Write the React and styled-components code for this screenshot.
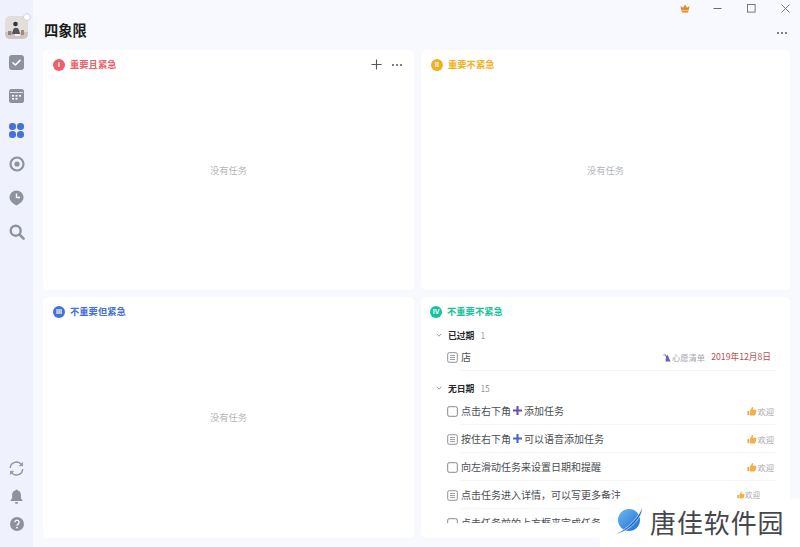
import React from "react";
import styled, { createGlobalStyle } from "styled-components";

const Global = createGlobalStyle`
  html, body { margin: 0; padding: 0; height: 100%; overflow: hidden; }
  body { font-family: "Noto Sans CJK SC", "Noto Sans", sans-serif; background: #f8f9fe; }
  #root { height: 100%; }
`;

const Shell = styled.div`
  position: relative; width: 800px; height: 547px; display: grid;
  grid-template-columns: 33px 1fr; background: #f8f9fe; overflow: hidden;
`;
const Sidebar = styled.nav`
  background: #eff2fc; display: flex; flex-direction: column; justify-content: space-between;
  align-items: center; padding: 16px 0 14px;
`;
const NavGroup = styled.div`
  display: flex; flex-direction: column; align-items: center; gap: ${p => p.$gap}px;
`;
const NavIcon = styled.div`
  width: 18px; height: 18px; display: flex; align-items: center; justify-content: center;
  color: #8e929e;
`;
const Avatar = styled.div`
  width: 23px; height: 23px; border-radius: 5px; overflow: hidden;
`;
const AvatarWrap = styled.div`position: relative; margin: 0 1px -2px 0;`;
const AvatarBadge = styled.span`
  position: absolute; top: -3px; right: -3px; width: 8px; height: 8px; border-radius: 50%;
  background: #fff; border: 1px solid #cfd1da; box-sizing: border-box;
`;
const Main = styled.main`
  display: flex; flex-direction: column; padding: 0 10px 9px; min-width: 0;
`;
const Header = styled.header`
  height: 50px; flex: none; display: flex; flex-direction: column;
`;
const WindowBar = styled.div`
  height: 17px; display: flex; align-items: center; justify-content: flex-end; gap: 24px;
`;
const WinBtn = styled.span`
  width: 10px; height: 10px; display: flex; align-items: center; justify-content: center; color: #666a72;
  margin-right: ${p => p.$mr || 0}px;
`;
const TitleRow = styled.div`
  flex: 1; display: flex; align-items: center; justify-content: space-between; padding: 0 3px 7px 1px;
`;
const Title = styled.h1`
  margin: 0; font-size: 14.3px; line-height: 20px; font-weight: 700; color: #1b1c20;
`;
const Dots = styled.span`
  display: inline-flex; gap: 2px; align-items: center;
  i { width: 2px; height: 2px; border-radius: 50%; background: ${p => p.$c || "#555"}; display: block; }
`;
const HeaderDots = styled(Dots)`margin-top: 6px;`;
const Grid = styled.section`
  flex: 1; min-height: 0; display: grid; grid-template-columns: 371px 369px; grid-template-rows: 240px 241px; gap: 7px;
`;
const Card = styled.article`
  background: #fff; border-radius: 5px; display: flex; flex-direction: column; overflow: hidden;
  padding: 8px 10px 0; position: relative; min-height: 0;
`;
const CardHead = styled.div`
  display: flex; align-items: center; height: 13px; flex: none; gap: 5px;
  margin-left: ${p => p.$ml || 0}px;
`;
const Quad = styled.span`
  width: 12px; height: 12px; border-radius: 50%; background: ${p => p.$c}; color: #fff;
  font: 700 7px/12px "Liberation Sans", sans-serif; text-align: center; flex: none;
`;
const CardTitle = styled.h2`
  margin: 0; font-size: 9.3px; line-height: 13px; font-weight: 700; color: ${p => p.$c}; flex: 1;
`;
const CardTools = styled.div`
  display: flex; align-items: center; gap: 10px; color: #555; margin-right: 2px;
`;
const Empty = styled.div`
  flex: 1; display: flex; align-items: center; justify-content: center;
  font-size: 9.25px; color: #b4b6bb; padding-bottom: 22px;
`;
const List = styled.div`
  height: 195px; overflow: hidden; margin-top: 10px; flex: none;
`;
const Section = styled.div`
  display: flex; align-items: center; height: 14px; margin-bottom: ${p => p.$mb}px; margin-top: ${p => p.$mt || 0}px;
  padding-left: 5px;
`;
const Chevron = styled.svg`width: 6px; height: 6px; color: #8a8d94; flex: none; margin-right: 6px;`;
const SectionName = styled.span`font-size: 8.8px; font-weight: 700; color: #26272b;`;
const Count = styled.span`font-size: 8.5px; color: #9a9ca3; margin-left: 6px;`;
const Row = styled.div`
  height: 28px; box-sizing: border-box; display: flex; align-items: center; margin-left: 16px; margin-right: 4px;
`;
const RowIcon = styled.svg`width: 11px; height: 11px; flex: none; margin-right: 3px; color: #85878e;`;
const RowBody = styled.div`
  flex: 1; min-width: 0; height: 100%; display: flex; align-items: center; justify-content: space-between;
  border-bottom: 1px solid #f3f4f6; box-sizing: border-box; padding-right: 2px;
`;
const RowText = styled.span`
  font-size: 10px; color: #4b4d53; white-space: nowrap; display: inline-flex; align-items: center;
`;
const PlusMark = styled.svg`width: 11px; height: 11px; margin: 0 1px; color: ${p => p.$c};`;
const Meta = styled.span`display: inline-flex; align-items: center; gap: 6px; padding-right: 3px;`;
const Tag = styled.span`
  display: inline-flex; align-items: center; font-size: ${p => p.$small ? 7.5 : 8.3}px; color: #a4a6ad; white-space: nowrap;
  margin-right: ${p => p.$small ? 14 : 0}px;
`;
const DateText = styled.span`font-size: 8.7px; color: #b5524f; white-space: nowrap;`;
const Watermark = styled.div`
  position: absolute; right: 0; bottom: 0; width: 200px; height: 48px; background: #fff;
  display: flex; align-items: center; padding: 0 0 2px 14px; box-sizing: border-box; gap: 6px;
`;
const WatermarkText = styled.span`
  font-size: 26px; letter-spacing: .9px; color: #45474b; font-weight: 400; white-space: nowrap; line-height: 30px;
`;

const Check = () => (
  <svg width="15" height="15" viewBox="0 0 15 15"><rect width="15" height="15" rx="3" fill="currentColor" /><path d="M4 7.800l2.400 2.200L11 5.400" fill="none" stroke="#fff" strokeWidth="1.600" strokeLinecap="round" strokeLinejoin="round" /></svg>
);
const Calendar = () => (
  <svg width="15" height="14" viewBox="0 0 15 14"><rect width="15" height="14" rx="2.500" fill="currentColor" /><rect x="1" y="3" width="13" height="1" fill="#fff" opacity=".7" /><g fill="#fff"><rect x="3" y="6" width="2" height="1.600" /><rect x="6.500" y="6" width="2" height="1.600" /><rect x="10" y="6" width="2" height="1.600" /><rect x="3" y="9" width="2" height="1.600" /><rect x="6.500" y="9" width="2" height="1.600" /></g></svg>
);
const Quadrants = () => (
  <svg width="15" height="15" viewBox="0 0 15 15" fill="#4470e0"><rect width="7" height="7" rx="3.300" /><rect x="8" width="7" height="7" rx="3.300" /><rect y="8" width="7" height="7" rx="3.300" /><rect x="8" y="8" width="7" height="7" rx="3.300" /></svg>
);
const Target = () => (
  <svg width="16" height="16" viewBox="0 0 16 16"><circle cx="8" cy="8" r="6.500" fill="none" stroke="currentColor" strokeWidth="2.200" /><circle cx="8" cy="8" r="2.600" fill="currentColor" /></svg>
);
const ClockPin = () => (
  <svg width="15" height="16" viewBox="0 0 15 16"><path d="M7.500 0.500a7 7 0 0 1 7 7c0 3.400-3.600 6.300-7 8-3.400-1.700-7-4.600-7-8a7 7 0 0 1 7-7z" fill="currentColor" /><path d="M7.500 3.500V7.500H11" fill="none" stroke="#fff" strokeWidth="1.400" /></svg>
);
const Search = () => (
  <svg width="16" height="16" viewBox="0 0 16 16" fill="none" stroke="currentColor"><circle cx="6.700" cy="6.700" r="5" strokeWidth="2.400" /><path d="M10.500 10.500L14.600 14.600" strokeWidth="2.600" strokeLinecap="round" /></svg>
);
const Sync = () => (
  <svg width="15" height="15" viewBox="0 0 15 15" fill="none" stroke="currentColor" strokeWidth="1.400"><path d="M1.300 7A6.200 6.200 0 0 1 12.400 3.400" /><path d="M13.700 8A6.200 6.200 0 0 1 2.600 11.600" /><path d="M13.600 1.600V4.800H10.400z" fill="currentColor" strokeWidth=".6" /><path d="M1.400 13.400V10.200H4.600z" fill="currentColor" strokeWidth=".6" /></svg>
);
const Bell = () => (
  <svg width="15" height="15" viewBox="0 0 15 15" fill="currentColor"><path d="M7.500 0.500c.7 0 1.100.4 1.200 1 2 .5 3.200 2.200 3.200 4.400v3.400l1.600 2v.7H1.500v-.7l1.600-2V5.900c0-2.200 1.200-3.900 3.200-4.400.1-.6.500-1 1.200-1z" /><rect x="6" y="13" width="3" height="1.700" rx=".8" /></svg>
);
const Help = () => (
  <svg width="14" height="14" viewBox="0 0 14 14"><circle cx="7" cy="7" r="7" fill="currentColor" /><path d="M4.900 5.300a2.100 2.100 0 1 1 3.200 1.800c-.7.400-1.100.8-1.100 1.500" fill="none" stroke="#fff" strokeWidth="1.300" /><circle cx="7" cy="10.600" r=".9" fill="#fff" /></svg>
);
const AvatarArt = () => (
  <svg width="23" height="23" viewBox="0 0 23 23">
    <rect width="23" height="23" fill="#e2dedb" />
    <rect y="16" width="23" height="7" fill="#cfc6c0" />
    <circle cx="10.500" cy="8" r="2.300" fill="#34343c" />
    <path d="M8 14c1-3 5-3 6 0l1 4H7z" fill="#55535c" />
    <rect x="3" y="15" width="3.500" height="4" fill="#8d8680" />
    <rect x="16" y="14" width="3" height="5" fill="#a6897e" />
    <rect x="10" y="18" width="5" height="2" fill="#f5f3f0" />
  </svg>
);
const Crown = () => (
  <svg width="11" height="9" viewBox="0 0 11 9" fill="#e88a24"><path d="M0.500 1.800l2.800 2L5.500 0l2.200 3.800 2.800-2-1 5H1.500z" /><rect x="1.700" y="7.300" width="7.600" height="1.500" rx=".5" /></svg>
);
const Plus = () => (
  <svg width="11" height="11" viewBox="0 0 11 11"><path d="M5.500 0.500v10M0.500 5.500h10" stroke="currentColor" strokeWidth="1.100" fill="none" /></svg>
);
const ThreeDots = ({ as: Comp = Dots, c }) => <Comp $c={c}><i /><i /><i /></Comp>;

const Chev = () => (
  <Chevron viewBox="0 0 6 6"><path d="M0.800 1.800L3 4.200l2.200-2.400" fill="none" stroke="currentColor" strokeWidth=".9" /></Chevron>
);
const Box = () => (
  <RowIcon viewBox="0 0 11 11"><rect x=".7" y=".7" width="9.600" height="9.600" rx="1.500" fill="none" stroke="currentColor" strokeWidth="1" /></RowIcon>
);
const Note = () => (
  <RowIcon viewBox="0 0 11 11"><rect x=".7" y=".7" width="9.600" height="9.600" rx="1.500" fill="none" stroke="currentColor" strokeWidth=".9" /><path d="M3 3.500h5M3 5.500h5M3 7.500h5" stroke="currentColor" strokeWidth=".8" /></RowIcon>
);
const Thumb = ({ size = 10 }) => (
  <svg width={size} height={size} viewBox="0 0 10 10"><path d="M0.500 5h1.800v4H0.500z" fill="#e8a33c" /><path d="M3 4.800l2-3.800c.9 0 1.300.7 1 1.700L5.800 3.800h2.600c.8 0 1.200.6 1 1.300L8.500 8.500c-.2.600-.6.900-1.200.9H3z" fill="#f3b04a" /></svg>
);
const Wish = () => (
  <svg width="10" height="10" viewBox="0 0 10 10"><path d="M2 1l3 3 .5-1.500L8.500 9.500H3.500L4 5z" fill="#6f5ac0" /><path d="M1 2.500l2 .5-1 1.500z" fill="#a9a0dc" /></svg>
);
const PlusInline = ({ c }) => (
  <PlusMark $c={c} viewBox="0 0 11 11"><path d="M5.500 1v9M1 5.500h9" stroke="currentColor" strokeWidth="2.100" /></PlusMark>
);
const Globe = () => (
  <svg width="30" height="30" viewBox="0 0 30 30">
    <defs><linearGradient id="wm" x1="0" y1="0" x2="1" y2="1"><stop offset="0" stopColor="#6cb8f2" /><stop offset="1" stopColor="#1f6fd0" /></linearGradient></defs>
    <circle cx="15" cy="13" r="11" fill="url(#wm)" />
    <path d="M1 27C6 26 22 16 28 1c1 6-6 15-13 20-5 3.500-10 6-14 6z" fill="#1a68c8" stroke="#fff" strokeWidth=".6" />
  </svg>
);

const Tasks = [
  { icon: Box, parts: ["点击右下角", "#6650b8", "添加任务"] },
  { icon: Note, parts: ["按住右下角", "#4d62c0", "可以语音添加任务"] },
  { icon: Box, parts: ["向左滑动任务来设置日期和提醒"] },
  { icon: Note, parts: ["点击任务进入详情，可以写更多备注"], small: true },
  { icon: Box, parts: ["点击任务前的上方框来完成任务"], noTag: true },
];

const EmptyCard = ({ color, mark, title, tools }) => (
  <Card>
    <CardHead>
      <Quad $c={color}>{mark}</Quad>
      <CardTitle $c={color}>{title}</CardTitle>
      {tools && <CardTools><Plus /><ThreeDots c="#555" /></CardTools>}
    </CardHead>
    <Empty>没有任务</Empty>
  </Card>
);

export default function App() {
  return (
    <Shell>
      <Global />
      <Sidebar>
        <NavGroup $gap={16}>
          <AvatarWrap>
            <Avatar><AvatarArt /></Avatar>
            <AvatarBadge />
          </AvatarWrap>
          <NavIcon><Check /></NavIcon>
          <NavIcon><Calendar /></NavIcon>
          <NavIcon><Quadrants /></NavIcon>
          <NavIcon><Target /></NavIcon>
          <NavIcon><ClockPin /></NavIcon>
          <NavIcon><Search /></NavIcon>
        </NavGroup>
        <NavGroup $gap={10}>
          <NavIcon><Sync /></NavIcon>
          <NavIcon><Bell /></NavIcon>
          <NavIcon><Help /></NavIcon>
        </NavGroup>
      </Sidebar>
      <Main>
        <Header>
          <WindowBar>
            <WinBtn $mr={-2}><Crown /></WinBtn>
            <WinBtn><svg width="9" height="9" viewBox="0 0 9 9"><path d="M0.500 4.500h8" stroke="currentColor" strokeWidth="1" /></svg></WinBtn>
            <WinBtn><svg width="9" height="9" viewBox="0 0 9 9"><rect x=".5" y=".5" width="7.600" height="7.600" fill="none" stroke="currentColor" strokeWidth=".9" /></svg></WinBtn>
            <WinBtn><svg width="9" height="9" viewBox="0 0 9 9"><path d="M.5.500l8 8M8.500.500l-8 8" stroke="currentColor" strokeWidth=".9" /></svg></WinBtn>
          </WindowBar>
          <TitleRow>
            <Title>四象限</Title>
            <ThreeDots as={HeaderDots} c="#555" />
          </TitleRow>
        </Header>
        <Grid>
          <EmptyCard color="#ee5f6b" mark="I" title="重要且紧急" tools />
          <EmptyCard color="#f2b021" mark="II" title="重要不紧急" />
          <EmptyCard color="#4470d8" mark="III" title="不重要但紧急" />
          <Card>
            <CardHead $ml={-1}>
              <Quad $c="#19c29a">IV</Quad>
              <CardTitle $c="#19c29a">不重要不紧急</CardTitle>
            </CardHead>
            <List>
              <Section $mb={1}><Chev /><SectionName>已过期</SectionName><Count>1</Count></Section>
              <Row>
                <Note />
                <RowBody>
                  <RowText>店</RowText>
                  <Meta>
                    <Tag><Wish />心愿清单</Tag>
                    <DateText>2019年12月8日</DateText>
                  </Meta>
                </RowBody>
              </Row>
              <Section $mt={10} $mb={2}><Chev /><SectionName>无日期</SectionName><Count>15</Count></Section>
              {Tasks.map((t, i) => {
                const Icon = t.icon;
                return (
                  <Row key={i}>
                    <Icon />
                    <RowBody>
                      <RowText>
                        {t.parts[0]}
                        {t.parts[1] && <PlusInline c={t.parts[1]} />}
                        {t.parts[2]}
                      </RowText>
                      {!t.noTag && (
                        <Tag $small={t.small}>
                          <Thumb size={t.small ? 8 : 10} />欢迎
                        </Tag>
                      )}
                    </RowBody>
                  </Row>
                );
              })}
            </List>
          </Card>
        </Grid>
      </Main>
      <Watermark>
        <Globe />
        <WatermarkText>唐佳软件园</WatermarkText>
      </Watermark>
    </Shell>
  );
}
